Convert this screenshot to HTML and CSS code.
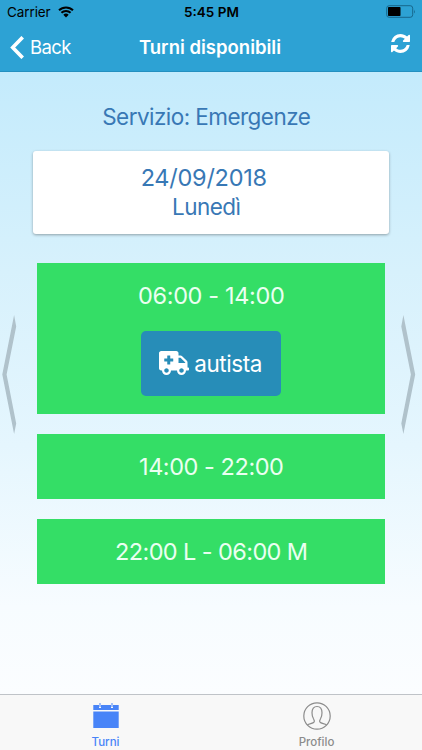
FILE: index.html
```html
<!DOCTYPE html>
<html lang="it">
<head>
<meta charset="utf-8">
<title>Turni disponibili</title>
<link rel="stylesheet" href="styles.css">
</head>
<body>
<div class="app">
  <header class="header">
    <div class="status">
      <div class="carrier"><span>Carrier</span>
        <svg class="wifi" viewBox="0 0 16 12"><path d="M1 4.3a10 10 0 0 1 14 0M3.4 6.8a6.6 6.6 0 0 1 9.2 0" fill="none" stroke="#000" stroke-width="2"/><path d="M5.3 8.8a3.9 3.9 0 0 1 5.4 0L8 11.5z"/></svg>
      </div>
      <div class="clock">5:45 PM</div>
      <svg class="battery" viewBox="0 0 30 14"><rect x=".7" y=".7" width="26" height="11.6" rx="2.5" fill="none" stroke="#17678c"/><rect x="2" y="2" width="12.5" height="9" rx=".8"/><path d="M28 4.5q1.500 2 0 4z" fill="#17678c"/></svg>
    </div>
    <nav class="navbar">
      <div class="back"><svg class="back-icon" viewBox="0 0 14 23"><path d="M12.7 1.200 2.700 11.500l10 10.300" fill="none" stroke="#fff" stroke-width="3.600"/></svg><span>Back</span></div>
      <h1 class="title">Turni disponibili</h1>
      <svg class="refresh" viewBox="0 0 1536 1536"><path fill="#fff" d="M1511 928q0 5-1 7-64 268-268 434.500t-478 166.500q-146 0-282.500-55t-243.500-157l-129 129q-19 19-45 19t-45-19-19-45v-448q0-26 19-45t45-19h448q26 0 45 19t19 45-19 45l-137 137q71 66 161 102t187 36q134 0 250-65t186-179q11-17 53-117 8-23 30-23h192q13 0 22.500 9.500t9.500 22.500zm25-800v448q0 26-19 45t-45 19h-448q-26 0-45-19t-19-45 19-45l138-138q-148-137-349-137-134 0-250 65t-186 179q-11 17-53 117-8 23-30 23h-199q-13 0-22.500-9.500t-9.500-22.500v-7q65-268 270-434.500t480-166.500q146 0 284 55.500t245 156.500l130-129q19-19 45-19t45 19 19 45z"/></svg>
    </nav>
  </header>
  <main class="content">
    <svg class="arrow" viewBox="0 0 16 120"><path d="M13.100 1 1.300 60.500l11.800 59.500 2.100-10.500L5.600 60.500l9.600-48z"/></svg>
    <div class="column">
      <h2 class="service">Servizio: Emergenze</h2>
      <section class="date-card"><div class="date">24/09/2018</div><div class="day">Lunedì</div></section>
      <section class="shift open">
        <div class="hours">06:00 - 14:00</div>
        <div class="role">
          <svg class="truck" viewBox="0 0 640 512"><path fill="#fff" d="M624 352h-16V243.900c0-12.700-5.100-24.900-14.100-33.900L494 110.100c-9-9-21.200-14.100-33.900-14.100H416V48c0-26.500-21.500-48-48-48H48C21.500 0 0 21.500 0 48v320c0 26.500 21.500 48 48 48h16c0 53 43 96 96 96s96-43 96-96h128c0 53 43 96 96 96s96-43 96-96h48c8.800 0 16-7.200 16-16v-32c0-8.800-7.200-16-16-16zM160 464c-26.500 0-48-21.500-48-48s21.500-48 48-48 48 21.500 48 48-21.500 48-48 48zm144-248c0 4.400-3.600 8-8 8h-56v56c0 4.400-3.600 8-8 8h-48c-4.400 0-8-3.600-8-8v-56h-56c-4.400 0-8-3.600-8-8v-48c0-4.400 3.600-8 8-8h56v-56c0-4.400 3.600-8 8-8h48c4.400 0 8 3.600 8 8v56h56c4.400 0 8 3.600 8 8v48zm176 248c-26.500 0-48-21.500-48-48s21.500-48 48-48 48 21.500 48 48-21.500 48-48 48zm80-208H416V144h44.100l99.900 99.900V256z"/></svg>
          <span>autista</span>
        </div>
      </section>
      <section class="shift"><div class="hours second">14:00 - 22:00</div></section>
      <section class="shift"><div class="hours third">22:00 L - 06:00 M</div></section>
    </div>
    <svg class="arrow" viewBox="0 0 16 120"><path d="M3.400 1l11.800 59.500L3.400 120 1.300 109.500l9.600-49-9.600-48z"/></svg>
  </main>
  <footer class="tabs">
    <div class="tab active">
      <svg class="tab-icon" viewBox="0 0 28 28"><path fill="#4884f8" d="M1.300 3H7v3h2V3h10v3h2V3h5.700v5H1.300zM1.300 9.500h25.400V26H1.300z"/><path fill="#4884f8" d="M7.500 1h1v4h-1zM19.500 1h1v4h-1z"/></svg>
      <span>Turni</span>
    </div>
    <div class="tab">
      <svg class="tab-icon" viewBox="0 0 28 28" fill="none" stroke="#8c8c8c" stroke-width="1.200"><circle cx="14" cy="14" r="13.200"/><path d="M4.500 22.800c1.800-1.300 5.500-1.200 6.500-2.600.8-1.200 0-2.700-.7-3.900-.8-1.500-1.300-3-1.300-5.500 0-4 1.800-6.300 5-6.300s5 2.300 5 6.300c0 2.500-.5 4-1.300 5.500-.7 1.200-1.500 2.700-.7 3.900 1 1.400 4.700 1.300 6.500 2.600"/></svg>
      <span>Profilo</span>
    </div>
  </footer>
</div>
</body>
</html>
```
FILE: styles.css
```css
* { box-sizing: border-box; }
body { margin: 0; font-family: Inter, "Liberation Sans", sans-serif; }
.app { width: 422px; height: 750px; display: flex; flex-direction: column; overflow: hidden; }
.header { height: 72px; flex: none; background: #2da2d4; border-bottom: 1px solid #2490c0; }
.status { height: 23px; display: grid; grid-template-columns: 1fr auto 1fr; align-items: center; padding: 1px 6px 0 7px; font-size: 13.5px; line-height: 20px; }
.carrier { display: flex; align-items: center; gap: 7px; letter-spacing: -.1px; }
.wifi { width: 16px; height: 12px; }
.clock { font-weight: 600; font-size: 13.5px; }
.battery { width: 30px; height: 14px; justify-self: end; }
.navbar { height: 48px; display: grid; grid-template-columns: 1fr auto 1fr; align-items: center; padding: 0 12px 0 10px; color: #fff; }
.back { display: flex; align-items: center; gap: 6.500px; font-size: 18.5px; letter-spacing: -.6px; margin-left: -.5px; }
.back-icon { width: 14px; height: 23px; }
.title { margin: 0; font-size: 18.5px; font-weight: 600; letter-spacing: 0; line-height: 24px; }
.refresh { width: 19px; height: 19px; justify-self: end; margin-bottom: 7px; }
.content { flex: 1; display: flex; align-items: flex-start; justify-content: space-between; padding: 0 6.500px 0 1px; background: linear-gradient(#c4ebfc, #d7f1fc 32%, #e5f6fe 60%, #f7fcff 86%, #fbfdff); }
.arrow { width: 16px; height: 120px; margin-top: 242px; fill: #b0c2cb; flex: none; }
.column { width: 356px; margin-left: 6px; display: flex; flex-direction: column; align-items: center; padding-top: 30px; color: #3878b5; }
.service { margin: 0 10px 0 0; font-size: 22.5px; line-height: 30px; font-weight: 400; letter-spacing: -.55px; }
.date-card { width: 356px; height: 83px; margin: 19px 0 29px; padding: 12px 15px 0 0; border-radius: 3px; background: #fff; box-shadow: 0 1px 3px #0005; font-size: 23.5px; line-height: 29px; text-align: center; letter-spacing: -.25px; }
.day { padding: 0 0 0 5px; font-size: 22.5px; letter-spacing: -.5px; }
.shift { width: 348px; height: 65px; flex: none; margin-bottom: 20.500px; background: #34de66; color: #eafff1; display: flex; flex-direction: column; align-items: center; padding-top: 18px; }
.shift.open { height: 150.500px; margin-bottom: 20px; }
.hours { font-size: 23.5px; line-height: 30px; letter-spacing: -.35px; }
.hours.second { letter-spacing: -.45px; }
.hours.third { letter-spacing: -.6px; }
.role { display: flex; align-items: center; gap: 5px; width: 140px; height: 65px; margin-top: 20px; padding-left: 18px; background: #278db8; border-radius: 5px; color: #fff; font-size: 22.5px; letter-spacing: -.45px; flex: none; }
.truck { width: 30px; height: 24px; margin-top: -2px; }
.tabs { height: 56px; flex: none; display: grid; grid-template-columns: 1fr 1fr; border-top: 1px solid #bfc3c8; background: #f8f8f8; }
.tab { display: flex; flex-direction: column; align-items: center; padding-top: 7px; color: #8c8c8c; font-size: 11.5px; font-weight: 500; line-height: 16px; letter-spacing: 0; }
.tab.active { color: #4884f8; }
.tab-icon { width: 28px; height: 28px; margin-bottom: 3.500px; }
```
